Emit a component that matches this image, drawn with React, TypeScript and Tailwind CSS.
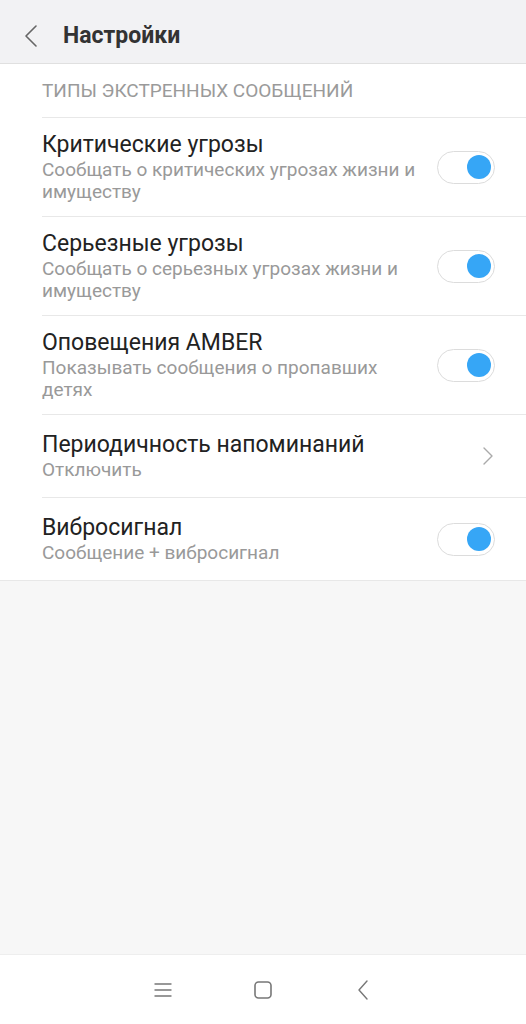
import React from "react";

type Row = {
  title: string;
  subtitle: string;
  kind: "toggle" | "chevron";
};

const rows: Row[] = [
  {
    title: "Критические угрозы",
    subtitle: "Сообщать о критических угрозах жизни и имуществу",
    kind: "toggle",
  },
  {
    title: "Серьезные угрозы",
    subtitle: "Сообщать о серьезных угрозах жизни и имуществу",
    kind: "toggle",
  },
  {
    title: "Оповещения AMBER",
    subtitle: "Показывать сообщения о пропавших детях",
    kind: "toggle",
  },
  { title: "Периодичность напоминаний", subtitle: "Отключить", kind: "chevron" },
  { title: "Вибросигнал", subtitle: "Сообщение + вибросигнал", kind: "toggle" },
];

function Toggle() {
  return (
    <div className="flex h-[33px] w-[58px] shrink-0 items-center justify-end rounded-full border border-[#dcdcdc] bg-white pr-[3px]">
      <div className="h-[24px] w-[24px] rounded-full bg-[#36a6f6]" />
    </div>
  );
}

function Chevron({ className }: { className?: string }) {
  return (
    <svg viewBox="0 0 12 20" className={className} fill="none" stroke="currentColor" strokeWidth="1.4">
      <path d="M2 2l8 8-8 8" strokeLinecap="round" strokeLinejoin="round" />
    </svg>
  );
}

export default function App() {
  return (
    <div
      className="flex h-[1024px] w-[526px] flex-col bg-[#f7f7f7]"
      style={{ fontFamily: "Roboto, 'Noto Sans', sans-serif" }}
    >
      {/* Top bar */}
      <header className="flex h-[64px] shrink-0 items-center border-b border-[#e0e0e0] bg-[#f2f2f4] pt-[9px]">
        <svg viewBox="0 0 14 22" className="ml-[24px] h-[22px] w-[14px] text-[#666]" fill="none" stroke="currentColor" strokeWidth="1.6">
          <path d="M12 1L2 11l10 10" strokeLinecap="round" strokeLinejoin="round" />
        </svg>
        <h1 className="ml-[25px] text-[23px] font-bold text-[#333]">Настройки</h1>
      </header>

      {/* Settings list */}
      <div className="bg-white pl-[42px]">
        <div className="flex h-[53px] items-center pt-[2px] text-[19px] text-[#9a9a9a]">
          ТИПЫ ЭКСТРЕННЫХ СООБЩЕНИЙ
        </div>
        {rows.map((r) => (
          <div
            key={r.title}
            className="flex min-h-[83px] items-center border-t border-[#e8e8e8] pr-[31px]"
          >
            <div className="min-w-0 flex-1 py-[13px] pr-[14px]">
              <div className="text-[23px] leading-[28px] text-[#222]">{r.title}</div>
              <div className="text-[19px] leading-[22px] text-[#999]">{r.subtitle}</div>
            </div>
            {r.kind === "toggle" ? (
              <Toggle />
            ) : (
              <Chevron className="mr-[1px] h-[20px] w-[12px] text-[#aaa]" />
            )}
          </div>
        ))}
      </div>
      <div className="h-px bg-[#e8e8e8]" />

      <div className="flex-1" />

      {/* Navigation bar */}
      <nav className="flex h-[70px] shrink-0 items-center justify-center border-t border-[#eeeeee] bg-white">
        <div className="grid w-[300px] grid-cols-3 place-items-center">
          <svg viewBox="0 0 18 16" className="h-[16px] w-[18px] text-[#777]" fill="none" stroke="currentColor" strokeWidth="1.4">
            <path d="M1 2h16M1 8h16M1 14h16" strokeLinecap="round" />
          </svg>
          <svg viewBox="0 0 18 18" className="h-[18px] w-[18px] text-[#777]" fill="none" stroke="currentColor" strokeWidth="1.6">
            <rect x="1" y="1" width="16" height="16" rx="3.5" />
          </svg>
          <svg viewBox="0 0 12 20" className="h-[20px] w-[12px] text-[#777]" fill="none" stroke="currentColor" strokeWidth="1.4">
            <path d="M10 1L2 10l8 9" strokeLinecap="round" strokeLinejoin="round" />
          </svg>
        </div>
      </nav>
    </div>
  );
}
